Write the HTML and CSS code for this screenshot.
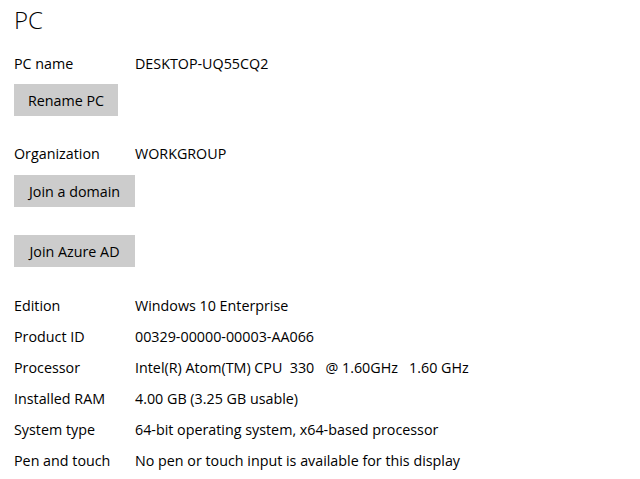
FILE: index.html
```html
<!DOCTYPE html>
<html>
<head>
<meta charset="utf-8">
<link rel="stylesheet" href="styles.css">
</head>
<body>
<div class="page">
  <h1 class="title">PC</h1>
  <div class="row row-name"><span class="label">PC name</span><span class="value">DESKTOP-UQ55CQ2</span></div>
  <button class="btn btn-rename">Rename PC</button>
  <div class="row row-org"><span class="label">Organization</span><span class="value">WORKGROUP</span></div>
  <button class="btn btn-domain">Join a domain</button>
  <button class="btn btn-azure">Join Azure AD</button>
  <div class="specs">
    <div class="row spec"><span class="label">Edition</span><span class="value">Windows 10 Enterprise</span></div>
    <div class="row spec"><span class="label">Product ID</span><span class="value">00329-00000-00003-AA066</span></div>
    <div class="row spec"><span class="label">Processor</span><span class="value">Intel(R) Atom(TM) CPU&nbsp;&nbsp;330&nbsp;&nbsp;&nbsp;@ 1.60GHz&nbsp;&nbsp;&nbsp;1.60 GHz</span></div>
    <div class="row spec"><span class="label">Installed RAM</span><span class="value">4.00 GB (3.25 GB usable)</span></div>
    <div class="row spec"><span class="label">System type</span><span class="value">64-bit operating system, x64-based processor</span></div>
    <div class="row spec"><span class="label">Pen and touch</span><span class="value">No pen or touch input is available for this display</span></div>
  </div>
</div>
</body>
</html>
```
FILE: styles.css
```css
html, body {
  margin: 0;
  padding: 0;
  background: #ffffff;
}
body {
  font-family: "Open Sans", "Noto Sans", "Liberation Sans", sans-serif;
  font-size: 14.3px;
  color: #000000;
}
.page {
  display: flex;
  flex-direction: column;
  align-items: flex-start;
  padding-left: 14px;
}
.title {
  margin: 0;
  font-size: 24px;
  font-weight: 300;
  line-height: 40px;
  height: 40px;
}
.row {
  display: flex;
  align-items: center;
  height: 20px;
  line-height: 20px;
  white-space: nowrap;
}
.label {
  width: 121px;
  flex: none;
}
.row-name { margin-top: 14px; }
.row-org { margin-top: 28px; }
.btn {
  font: inherit;
  color: #000;
  background: #cccccc;
  border: none;
  height: 32px;
  padding: 0;
  margin: 0;
  white-space: nowrap;
  text-align: center;
}
.btn-rename { margin-top: 10px; width: 104px; }
.btn-domain { margin-top: 11px; width: 121px; }
.btn-azure { margin-top: 28px; width: 121px; }
.specs {
  margin-top: 23px;
  display: flex;
  flex-direction: column;
}
.spec {
  height: 31px;
  line-height: 31px;
}
```
